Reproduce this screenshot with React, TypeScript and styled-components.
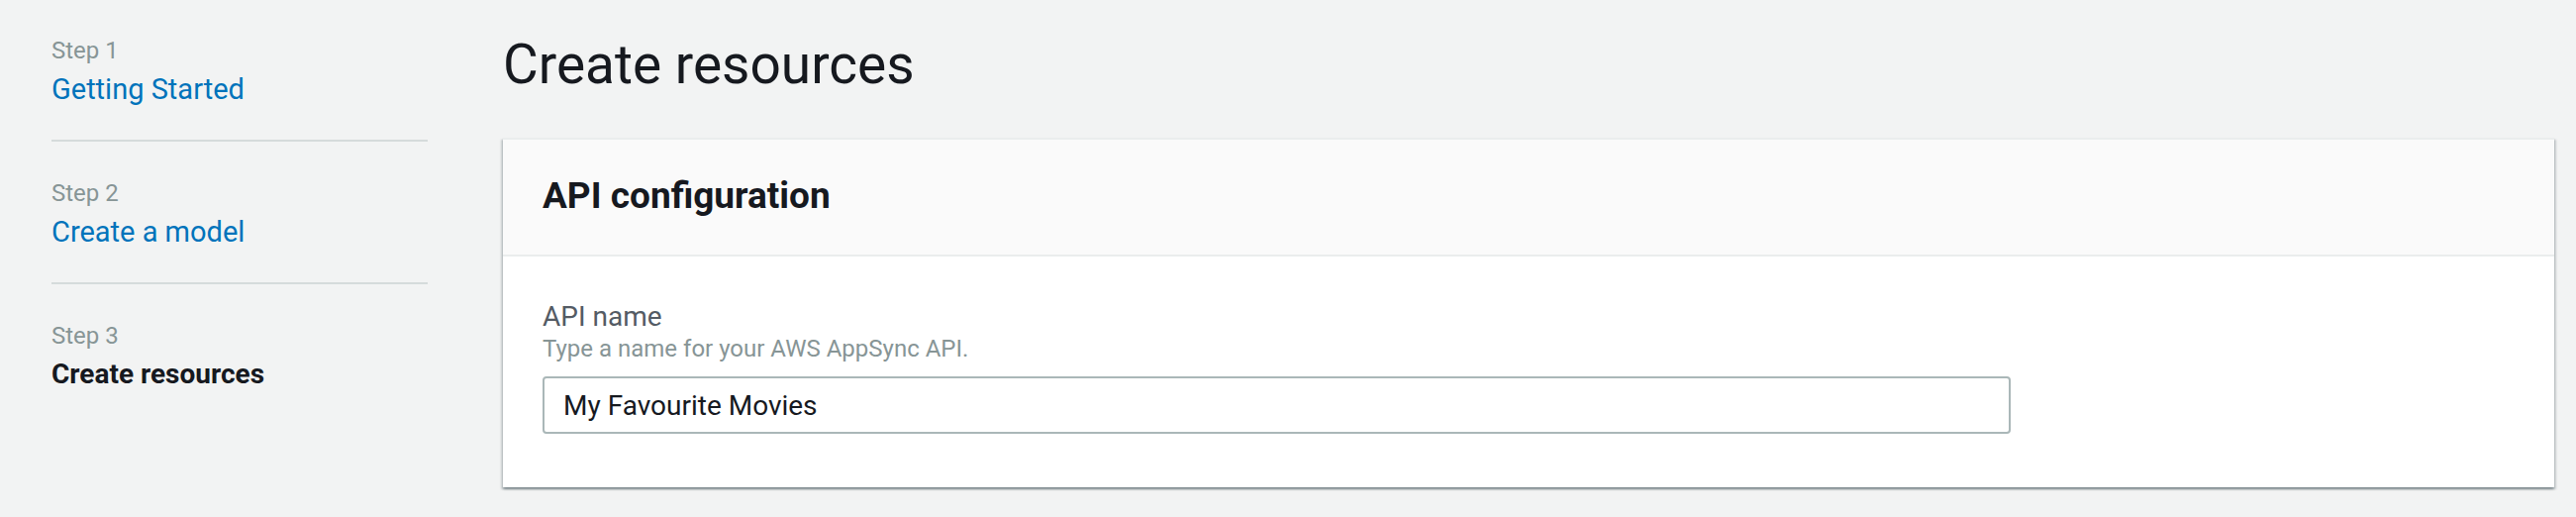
import React from "react";
import styled, { createGlobalStyle } from "styled-components";

const GlobalStyle = createGlobalStyle`
  html, body {
    margin: 0;
    padding: 0;
    background: #f2f3f3;
  }
  body {
    font-family: Roboto, "Liberation Sans", Arial, sans-serif;
    color: #16191f;
  }
`;

const Page = styled.div`
  display: grid;
  grid-template-columns: 380px 1fr;
  column-gap: 76px;
  padding: 0 22px 0 52px;
  min-height: 522px;
`;

const StepNav = styled.nav`
  display: flex;
  flex-direction: column;
`;

const StepItem = styled.div`
  display: flex;
  flex-direction: column;
  gap: 3px;
  padding: 36px 0 31px;
  border-bottom: 2px solid #d5dbdb;

  &:first-child {
    padding-top: 35px;
  }
  &:last-child {
    border-bottom: none;
  }
`;

const StepLabel = styled.span`
  font-size: 24px;
  line-height: 32px;
  color: #879596;
`;

const StepTitle = styled.a<{ $active?: boolean }>`
  font-size: ${(p) => (p.$active ? "28px" : "29px")};
  line-height: 40px;
  text-decoration: none;
  color: ${(p) => (p.$active ? "#16191f" : "#0073bb")};
  font-weight: ${(p) => (p.$active ? 700 : 400)};
  cursor: ${(p) => (p.$active ? "default" : "pointer")};
`;

const Main = styled.main`
  display: flex;
  flex-direction: column;
`;

const Heading = styled.h1`
  margin: 33px 0 42px;
  font-size: 55px;
  line-height: 64px;
  font-weight: 400;
  color: #16191f;
`;

const Card = styled.section`
  background: #fff;
  box-shadow: 0 2px 2px 0 rgba(0, 28, 36, 0.3),
    2px 2px 2px 0 rgba(0, 28, 36, 0.15),
    -2px 2px 2px 0 rgba(0, 28, 36, 0.15);
  border-top: 2px solid #eaeded;
`;

const CardHeader = styled.header`
  background: #fafafa;
  border-bottom: 2px solid #eaeded;
  padding: 35px 40px 37px;
`;

const CardTitle = styled.h2`
  margin: 0;
  font-size: 37px;
  line-height: 44px;
  font-weight: 700;
  color: #16191f;
`;

const CardBody = styled.div`
  padding: 45px 40px 54px;
`;

const Field = styled.div`
  display: flex;
  flex-direction: column;
`;

const FieldLabel = styled.label`
  font-size: 28px;
  line-height: 32px;
  color: #545b64;
`;

const FieldHint = styled.span`
  font-size: 24px;
  line-height: 32px;
  color: #879596;
  margin-bottom: 12px;
`;

const TextInput = styled.input`
  box-sizing: border-box;
  width: 1483px;
  height: 58px;
  padding: 0 19px;
  border: 2px solid #aab7b8;
  border-radius: 4px;
  background: #fff;
  font-family: Roboto, "Liberation Sans", Arial, sans-serif;
  font-size: 28px;
  color: #16191f;
  outline: none;
`;

const steps = [
  { label: "Step 1", title: "Getting Started" },
  { label: "Step 2", title: "Create a model" },
  { label: "Step 3", title: "Create resources", active: true },
];

export default function App() {
  return (
    <>
      <GlobalStyle />
      <Page>
        <StepNav>
          {steps.map((s) => (
            <StepItem key={s.label}>
              <StepLabel>{s.label}</StepLabel>
              <StepTitle $active={s.active}>{s.title}</StepTitle>
            </StepItem>
          ))}
        </StepNav>
        <Main>
          <Heading>Create resources</Heading>
          <Card>
            <CardHeader>
              <CardTitle>API configuration</CardTitle>
            </CardHeader>
            <CardBody>
              <Field>
                <FieldLabel htmlFor="api-name">API name</FieldLabel>
                <FieldHint>Type a name for your AWS AppSync API.</FieldHint>
                <TextInput id="api-name" defaultValue="My Favourite Movies" />
              </Field>
            </CardBody>
          </Card>
        </Main>
      </Page>
    </>
  );
}
